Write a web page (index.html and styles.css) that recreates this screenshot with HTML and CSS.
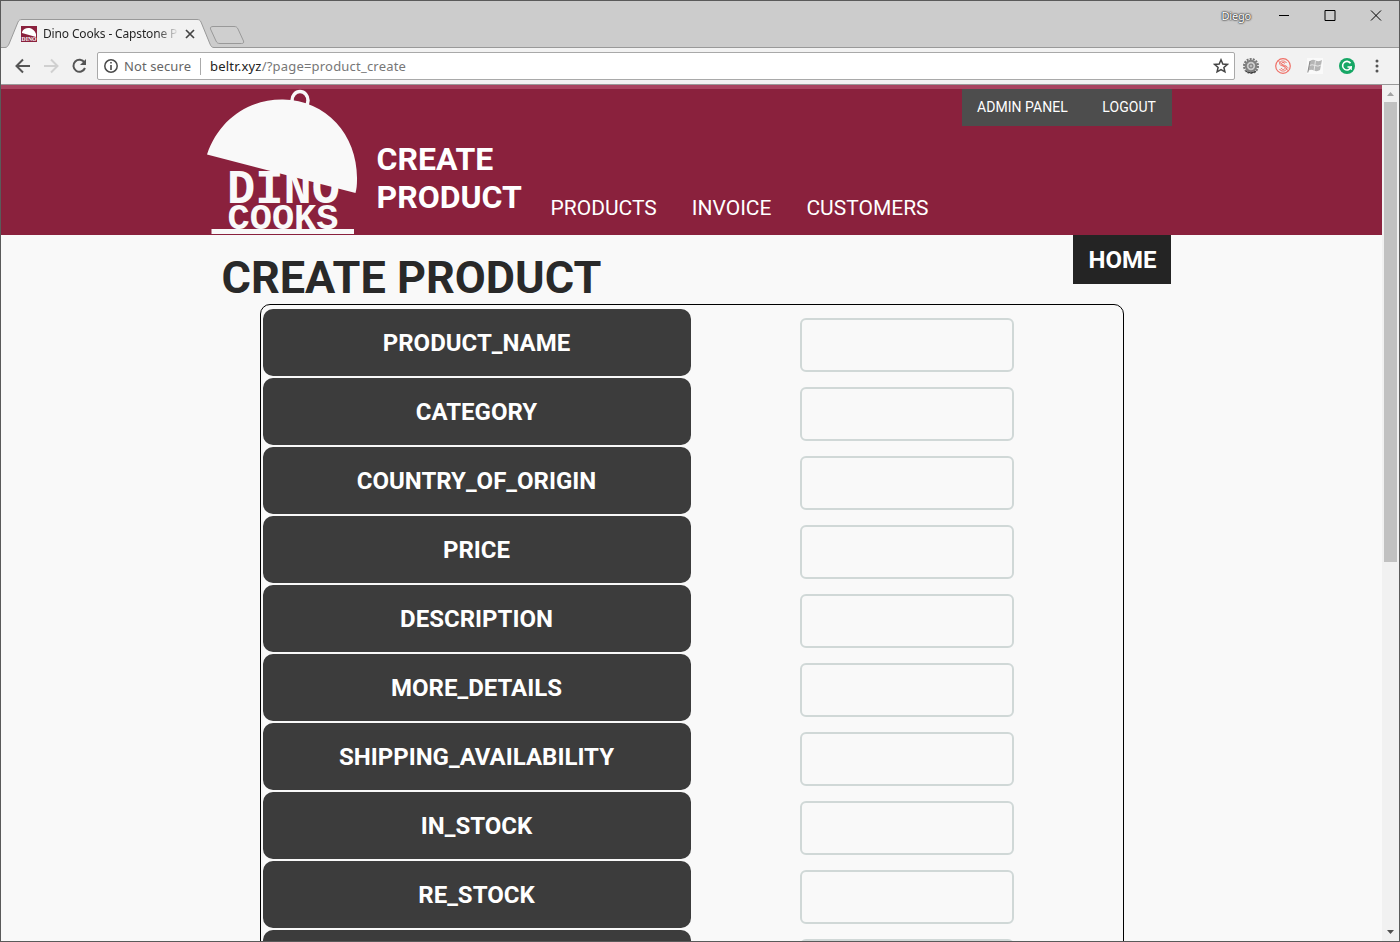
FILE: index.html
```html
<!DOCTYPE html>
<html lang="en">
<head>
<meta charset="utf-8">
<title>Dino Cooks - Capstone Project</title>
<link rel="stylesheet" href="styles.css">
</head>
<body>
<div class="window">
  <div class="titlebar">
    <div class="tab">
      <svg class="tab-shape" width="250" height="30" viewBox="0 0 250 30">
        <path d="M0 28.500H4C6 28.500 7 27 8 25L17 3C18 1 19 .5 21 .5H196C198 .5 199 1 200 3L209 25C210 27.500 211 28.500 213 28.500H250V30H0Z" fill="#f2f2f2"/>
        <path d="M0 28.500H4C6 28.500 7 27 8 25L17 3C18 1 19 .5 21 .5H196C198 .5 199 1 200 3L209 25C210 27.500 211 28.500 213 28.500H250" fill="none" stroke="#999"/>
        <path d="M212 7.500H233C235 7.500 236 8 237 10L242.500 22C243 23.500 242.500 24.500 240.500 24.500H219C217 24.500 216 24 215 22L209.500 10C209 8.500 210 7.500 212 7.500Z" fill="#cfcfcf" stroke="#999"/>
      </svg>
      <div class="tab-content">
        <svg width="16" height="16" viewBox="0 0 16 16"><path fill="#8a213d" d="M0 0H16V16H0Z"/><path fill="#fff" d="M1 6C3 1 12 0 15 8V11L1 7Z"/><text class="fav-text" x="0.500" y="14.500" textLength="15" lengthAdjust="spacingAndGlyphs">DINO</text></svg>
        <span class="tab-title">Dino Cooks - Capstone P</span>
        <svg width="10" height="10" viewBox="0 0 10 10"><path d="M1 1L9 9M9 1L1 9" stroke="#444" stroke-width="1.700"/></svg>
      </div>
    </div>
    <div class="controls">
      <span class="user">Diego</span>
      <svg width="106" height="12" viewBox="0 0 106 12" fill="none" stroke="#000"><path d="M0 5.500H10M46 .5H56V10.500H46ZM92 .5L102 10.500M102 .5L92 10.500"/></svg>
    </div>
  </div>
  <div class="toolbar">
    <svg class="nav-icons" width="76" height="20" viewBox="0 0 76 20" fill="none" stroke-width="2"><path stroke="#555" d="M15 10H2M8 3.500L1.500 10L8 16.500"/><path stroke="#d0d0d0" d="M29 10H42M36 3.500L42.500 10L36 16.500"/><path stroke="#555" d="M69.500 6.500A6 6 0 1 0 70 12"/><path fill="#555" d="M71 3V9H65Z"/></svg>
    <div class="address">
      <svg width="14" height="14" viewBox="0 0 14 14"><circle cx="7" cy="7" r="6.200" fill="none" stroke="#4a4a4a" stroke-width="1.500"/><path fill="#4a4a4a" d="M6.200 6H7.800V11H6.200ZM6.200 3H7.800V4.600H6.200Z"/></svg>
      <span class="security">Not secure</span><span class="divider"></span>
      <span class="url"><b>beltr.xyz</b>/?page=product_create</span>
      <svg class="star" width="16" height="16" viewBox="0 0 16 16"><path d="M8 1.800L9.800 6L14.300 6.400L10.900 9.400L11.900 13.800L8 11.500L4.100 13.800L5.100 9.400L1.700 6.400L6.200 6Z" fill="none" stroke="#444" stroke-width="1.500"/></svg>
    </div>
    <div class="extensions">
      <svg width="16" height="16" viewBox="0 0 16 16"><circle cx="8" cy="8" r="7" fill="none" stroke="#777" stroke-width="2" stroke-dasharray="2 1.140"/><circle cx="8" cy="8" r="5.200" fill="#ccc" stroke="#808080" stroke-width="2"/><circle cx="8" cy="8" r="2" fill="#bbb" stroke="#777"/><path d="M3 13.500Q8 16.500 13 13.500" fill="none" stroke="#333"/></svg>
      <svg width="16" height="16" viewBox="0 0 16 16" fill="none" stroke="#ef7067"><circle cx="8" cy="8" r="7.300" stroke-width="1.200"/><path d="M11.500 5C10 2 4.500 2.500 4.500 5.500C4.500 8.500 11.500 7.500 11.500 10.500C11.500 13.500 6 14 4.500 11M10 5.500C9 4 6.500 4.200 6.500 5.600C6.500 7 13 7.500 13 10.500M9.500 10.500C9.500 12 7 12 6 10"/><path d="M3 2.500L13.500 13"/></svg>
      <svg width="16" height="16" viewBox="0 0 16 16"><path fill="#fafafa" d="M0 0H16V16H0Z"/><path fill="#b5b5b5" d="M3 3Q6 1 8.500 2.500Q12 4 15 2L13 12Q10 14 7 12.500Q4 11 1 13Z"/><path d="M8.500 2.500L7 13M2.500 7.500Q5 6 8 7.500T14 7" fill="none" stroke="#e7e7e7"/><path d="M3 3L.8 14.500" stroke="#888"/></svg>
      <svg width="16" height="16" viewBox="0 0 16 16"><circle cx="8" cy="8" r="8" fill="#16a765"/><path d="M11.500 5.300A4.300 4.300 0 1 0 12 9H8.500" fill="none" stroke="#fff" stroke-width="1.600"/><path d="M12.300 8V12" stroke="#fff"/></svg>
      <svg class="menu" width="4" height="14" viewBox="0 0 4 14" fill="#555"><circle cx="2" cy="2" r="1.500"/><circle cx="2" cy="7" r="1.500"/><circle cx="2" cy="12" r="1.500"/></svg>
    </div>
  </div>
  <div class="viewport">
    <main class="page">
      <header class="site-header">
        <svg class="logo" width="152" height="146" viewBox="0 0 152 146">
          <g class="logo-text"><text x="20" y="114" font-size="48" textLength="113" lengthAdjust="spacingAndGlyphs">DINO</text><text x="20.500" y="139.500" font-size="36" textLength="111" lengthAdjust="spacingAndGlyphs">COOKS</text></g>
          <ellipse cx="93" cy="11.500" rx="8" ry="9" fill="none" stroke="#f9f9f9" stroke-width="3.500"/>
          <path d="M0 65.500C12 30 42 10 76 10.500C120 11 151 47 150 91C150 96 149.500 100 148.500 104Z" fill="#f9f9f9"/>
          <path d="M4.500 140H147V145H4.500Z" fill="#f9f9f9"/>
        </svg>
        <h2 class="brand-title">CREATE<br>PRODUCT</h2>
        <nav class="main-nav"><a>PRODUCTS</a><a>INVOICE</a><a>CUSTOMERS</a></nav>
        <nav class="user-nav"><a>ADMIN PANEL</a><a>LOGOUT</a></nav>
      </header>
      <section class="heading"><h1>CREATE PRODUCT</h1><a class="home">HOME</a></section>
      <form class="product-form">
        <div class="row"><label>PRODUCT_NAME</label><input></div>
        <div class="row"><label>CATEGORY</label><input></div>
        <div class="row"><label>COUNTRY_OF_ORIGIN</label><input></div>
        <div class="row"><label>PRICE</label><input></div>
        <div class="row"><label>DESCRIPTION</label><input></div>
        <div class="row"><label>MORE_DETAILS</label><input></div>
        <div class="row"><label>SHIPPING_AVAILABILITY</label><input></div>
        <div class="row"><label>IN_STOCK</label><input></div>
        <div class="row"><label>RE_STOCK</label><input></div>
        <div class="row"><label></label><input></div>
      </form>
    </main>
    <div class="scrollbar">
      <svg width="17" height="17" viewBox="0 0 17 17"><path fill="#a3a3a3" d="M5 11L8.500 7L12 11Z"/></svg>
      <div class="thumb"></div>
      <svg class="down" width="17" height="17" viewBox="0 0 17 17"><path fill="#505050" d="M5 6L8.500 10L12 6Z"/></svg>
    </div>
  </div>
</div>
</body>
</html>
```
FILE: styles.css
```css
* { box-sizing: border-box; }
body { margin: 0; overflow: hidden; font-family: Roboto, sans-serif; }
svg { display: block; flex: none; }
h1, h2 { margin: 0; }
.window { width: 1400px; height: 942px; border: 1px solid #5a5a5a; display: flex; flex-direction: column; overflow: hidden; background: #f9f9f9; }
.titlebar { height: 47px; flex: none; background: linear-gradient(#999, #999) 0 46px / 100% 1px no-repeat #ccc; display: flex; justify-content: space-between; align-items: flex-start; }
.tab { display: grid; margin-top: 18px; width: 250px; height: 29px; }
.tab-shape, .tab-content { grid-area: 1 / 1; }
.tab-content { display: flex; align-items: center; padding-left: 20px; height: 29px; font: 12px/16px "Noto Sans", sans-serif; }
.fav-text { font: bold 6px "Liberation Serif", serif; fill: #fff; }
.tab-title { width: 134px; margin: 0 8px 0 6px; overflow: hidden; white-space: nowrap; letter-spacing: -.15px; background: linear-gradient(90deg, #222 85%, #ddd 100%); background-clip: text; color: transparent; }
.controls { display: flex; align-items: center; padding: 7px 14px 0 0; gap: 28px; }
.user { font: 11px/15px "Noto Sans", sans-serif; letter-spacing: -.2px; color: #fff; text-shadow: 0 0 2px #333, 0 0 2px #333, 0 0 1px #333; }
.toolbar { height: 36px; flex: none; background: #f2f2f2; display: flex; align-items: center; padding: 0 18px 0 14px; }
.address { margin-left: 6px; width: 1138px; height: 28px; border: 1px solid #a9a9a9; border-radius: 2px; background: #fff; display: flex; align-items: center; padding: 0 5px 0 6px; font: 13px/18px "Noto Sans", sans-serif; color: #666; }
.security { margin-left: 6px; letter-spacing: .1px; }
.divider { width: 1px; height: 17px; background: #aaa; margin: 0 9px; }
.url { letter-spacing: .2px; color: #777; }
.url b { font-weight: 400; color: #222; }
.star { margin-left: auto; }
.extensions { display: flex; align-items: center; gap: 16px; margin-left: 8px; }
.menu { margin-left: 4px; }
.viewport { flex: 1; min-height: 0; display: flex; border-top: 1px solid #999; }
.page { width: 1381px; overflow: hidden; }
.site-header { height: 150px; border-top: 4px solid #a94360; background: #8a213d; display: flex; align-items: flex-start; padding: 0 210px 0 206px; }
.logo-text { font-family: "Liberation Mono", monospace; font-weight: 700; fill: #f9f9f9; }
.brand-title { margin: 51px 0 0 17.5px; width: 146px; color: #fff; font-size: 32px; line-height: 38px; }
.main-nav { display: flex; gap: 35px; margin: 106px 0 0 28px; color: #fff; font-size: 21px; line-height: 26px; }
.user-nav { margin-left: auto; width: 210px; height: 37px; background: #4d4d4d; display: flex; justify-content: space-between; padding: 0 16px 0 15px; color: #fff; font-size: 14px; line-height: 36px; font-weight: 400; letter-spacing: .05px; }
.heading { height: 69px; display: flex; justify-content: space-between; padding: 0 211px 0 220.5px; }
.heading h1 { color: #292929; font-size: 45px; line-height: 53px; padding-top: 16px; }
.home { width: 98px; height: 49px; padding-left: 1px; background: #242424; color: #fff; font-size: 24px; font-weight: 700; line-height: 51px; text-align: center; }
.product-form { width: 864px; margin-left: 259px; border: 1px solid #000; border-radius: 10px; padding: 4px 2px; display: flex; flex-direction: column; gap: 2px; }
.row { height: 67px; flex: none; display: grid; grid-template-columns: 428px 1fr; gap: 2px; align-items: center; justify-items: center; }
.row label { width: 428px; height: 67px; padding-right: 1px; border-radius: 10px; background: #3c3c3c; color: #fff; font-size: 24px; font-weight: 700; line-height: 69px; text-align: center; }
.row input { width: 214px; height: 54px; margin-top: 5px; border: 2px solid #d0d8d7; border-radius: 6px; background: #f9f9f9; }
.scrollbar { width: 17px; background: #f1f1f1; display: flex; flex-direction: column; }
.thumb { width: 13px; height: 460px; margin-left: 2px; background: #c1c1c1; }
.down { margin-top: auto; }
```
